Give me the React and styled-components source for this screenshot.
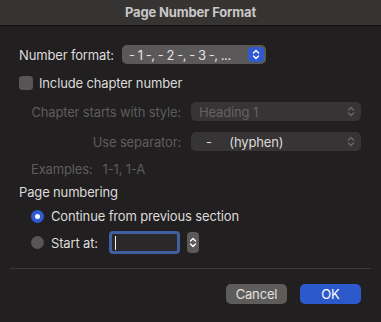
import React from "react";
import styled, { createGlobalStyle } from "styled-components";

const Global = createGlobalStyle`
  html, body { margin: 0; padding: 0; background: #1e1d1d; }
  body { font-family: Inter, "Noto Sans", sans-serif; -webkit-font-smoothing: antialiased; letter-spacing: -0.15px; }
  * { box-sizing: border-box; }
`;

const Window = styled.div`
  width: 381px;
  height: 322px;
  background: #211f1f;
  display: flex;
  flex-direction: column;
  color: #dcdada;
  font-size: 13px;
  overflow: hidden;
`;

const TitleBar = styled.div`
  height: 26px;
  flex: none;
  background: #363433;
  border-bottom: 1px solid #111010;
  display: flex;
  align-items: center;
  justify-content: center;
  font-weight: 700;
  font-size: 13px;
  color: #c9c7c7;
  padding-bottom: 1px;
`;

const Content = styled.div`
  display: flex;
  flex-direction: column;
  padding: 19px 19px 0 19px;
`;

const Row = styled.div`
  display: flex;
  align-items: center;
  gap: ${(p) => p.$gap ?? 6}px;
  margin-top: ${(p) => p.$mt ?? 0}px;
  padding-left: ${(p) => p.$indent ?? 0}px;
  height: ${(p) => p.$h ?? 16}px;
`;

const Label = styled.span`
  color: ${(p) => (p.$disabled ? "#5e5c5c" : "#dddbdb")};
  white-space: nowrap;
  width: ${(p) => (p.$w ? `${p.$w}px` : "auto")};
  flex: none;
`;

const Popup = styled.div`
  width: ${(p) => p.$w}px;
  height: 19px;
  border-radius: 5px;
  background: ${(p) => (p.$disabled ? "#363434" : "#5a5858")};
  color: ${(p) => (p.$disabled ? "#646262" : "#e6e4e4")};
  display: flex;
  align-items: center;
  padding: 0 2px 0 ${(p) => p.$pl ?? 8}px;
`;

const PopupText = styled.span`
  flex: 1;
  white-space: pre;
  overflow: hidden;
  color: ${(p) => p.$color ?? "inherit"};
  letter-spacing: ${(p) => p.$ls ?? -0.15}px;
`;

const Chevrons = styled.div`
  width: ${(p) => p.$w ?? 16}px;
  height: ${(p) => p.$h ?? 15}px;
  border-radius: 4px;
  background: ${(p) => p.$bg ?? "transparent"};
  display: flex;
  align-items: center;
  justify-content: center;
  flex: none;
`;

const UpDown = ({ color = "#fff", w = 8, h = 11 }) => (
  <svg width={w} height={h} viewBox="0 0 8 11" fill="none">
    <path d="M1.5 4 L4 1.5 L6.5 4" stroke={color} strokeWidth="1.4" strokeLinecap="round" strokeLinejoin="round" />
    <path d="M1.5 7 L4 9.5 L6.5 7" stroke={color} strokeWidth="1.4" strokeLinecap="round" strokeLinejoin="round" />
  </svg>
);

const Checkbox = styled.div`
  width: 14px;
  height: 14px;
  border-radius: 3.5px;
  background: #575555;
  flex: none;
`;

const Grid = styled.div`
  display: grid;
  grid-template-columns: 162px 170px;
  column-gap: 10px;
  row-gap: 11px;
  margin-top: 12px;
  align-items: center;
`;

const GridLabel = styled.span`
  text-align: right;
  color: #5e5c5c;
  white-space: nowrap;
`;

const Radio = styled.div`
  width: 13px;
  height: 13px;
  border-radius: 50%;
  background: ${(p) => (p.$on ? "#2e5bd0" : "#575555")};
  display: flex;
  align-items: center;
  justify-content: center;
  flex: none;
  &::after {
    content: "";
    display: ${(p) => (p.$on ? "block" : "none")};
    width: 5px;
    height: 5px;
    border-radius: 50%;
    background: #fff;
  }
`;

const Input = styled.div`
  width: 71px;
  height: 23px;
  border: 3px solid #3f5f9e;
  border-radius: 4px;
  background: #2a2828;
  margin-left: 4px;
  display: flex;
  align-items: center;
  padding-left: 3px;
  &::before {
    content: "";
    width: 1px;
    height: 14px;
    background: #f0f0f0;
  }
`;

const Divider = styled.div`
  height: 1px;
  background: #3a3838;
  margin: 14px 10px 0;
`;

const Footer = styled.div`
  display: flex;
  justify-content: flex-end;
  gap: 13px;
  padding: 15px 20px 0 0;
`;

const Button = styled.div`
  width: 61px;
  height: 20px;
  border-radius: 5px;
  background: ${(p) => (p.$primary ? "#2c59cc" : "#5e5c5b")};
  color: ${(p) => (p.$primary ? "#fff" : "#e2e0e0")};
  display: flex;
  align-items: center;
  justify-content: center;
`;

export default function App() {
  return (
    <>
      <Global />
      <Window>
        <TitleBar>Page Number Format</TitleBar>
        <Content>
          <Row $h={19} $gap={0}>
            <Label $w={103}>Number format:</Label>
            <Popup $w={144} $pl={7}>
              <PopupText $ls={-0.45}>- 1 -, - 2 -, - 3 -, ...</PopupText>
              <Chevrons $bg="#2f5ad0">
                <UpDown />
              </Chevrons>
            </Popup>
          </Row>
          <Row $mt={12} $h={14}>
            <Checkbox />
            <Label>Include chapter number</Label>
          </Row>
          <Grid>
            <GridLabel>Chapter starts with style:</GridLabel>
            <Popup $w={170} $disabled>
              <PopupText>Heading 1</PopupText>
              <Chevrons>
                <UpDown color="#6a6868" />
              </Chevrons>
            </Popup>
            <GridLabel>Use separator:</GridLabel>
            <Popup $w={170} $disabled>
              <PopupText $color="#dcdada">{"  -     (hyphen)"}</PopupText>
              <Chevrons>
                <UpDown color="#6a6868" />
              </Chevrons>
            </Popup>
          </Grid>
          <Row $mt={10} $indent={12} $gap={10}>
            <Label $disabled>Examples:</Label>
            <Label $disabled>1-1, 1-A</Label>
          </Row>
          <Row $mt={7}>
            <Label>Page numbering</Label>
          </Row>
          <Row $mt={8} $indent={12} $gap={7}>
            <Radio $on />
            <Label>Continue from previous section</Label>
          </Row>
          <Row $mt={7} $indent={12} $gap={7} $h={23}>
            <Radio />
            <Label>Start at:</Label>
            <Input />
            <Chevrons $w={12} $h={21} $bg="#5a5858">
              <UpDown />
            </Chevrons>
          </Row>
        </Content>
        <Divider />
        <Footer>
          <Button>Cancel</Button>
          <Button $primary>OK</Button>
        </Footer>
      </Window>
    </>
  );
}
